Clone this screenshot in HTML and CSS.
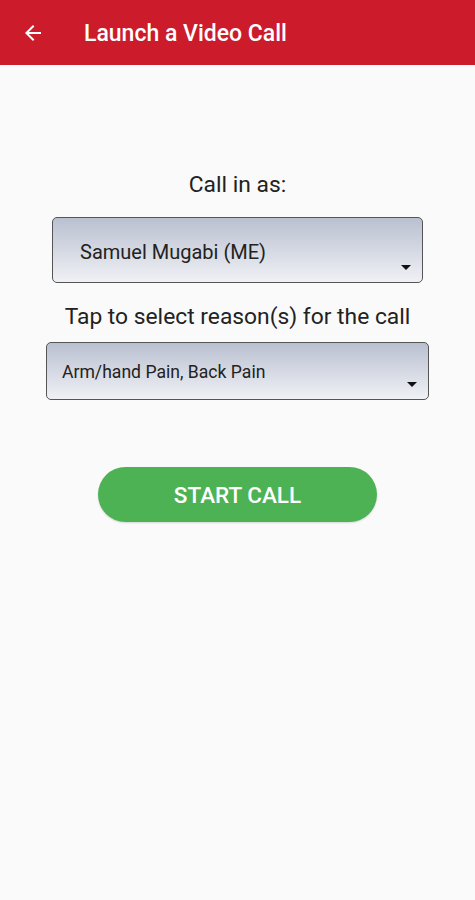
FILE: index.html
```html
<!DOCTYPE html>
<html lang="en">
<head>
  <meta charset="UTF-8" />
  <meta name="viewport" content="width=device-width, initial-scale=1.0" />
  <title>Launch a Video Call</title>
  <link rel="stylesheet" href="styles.css">
</head>
<body>
  <header class="toolbar">
    <svg class="back" width="24" height="24" viewBox="0 0 24 24">
      <path d="M20 11H7.83l5.59-5.59L12 4l-8 8 8 8 1.41-1.41L7.83 13H20v-2z" fill="#fff"/>
    </svg>
    <h1>Launch a Video Call</h1>
  </header>

  <main class="content">
    <p class="label">Call in as:</p>
    <div class="select select-user">
      <span>Samuel Mugabi (ME)</span>
      <i class="caret"></i>
    </div>

    <p class="label label-reason">Tap to select reason(s) for the call</p>
    <div class="select select-reason">
      <span>Arm/hand Pain, Back Pain</span>
      <i class="caret"></i>
    </div>

    <button class="start">START CALL</button>
  </main>
</body>
</html>
```

FILE: styles.css
```css
body {
  margin: 0;
  font-family: Roboto, sans-serif;
  background: #fafafa;
  min-height: 900px;
}

.toolbar {
  height: 65px;
  background: #cc1b2b;
  display: flex;
  align-items: center;
  padding-left: 21px;
  box-sizing: border-box;
}

.back {
  flex-shrink: 0;
}

.toolbar h1 {
  margin: 2px 0 0 39px;
  color: #fff;
  font-size: 23px;
  font-weight: 500;
}

.content {
  display: flex;
  flex-direction: column;
  align-items: center;
  padding-top: 107px;
}

.label {
  margin: 0;
  font-size: 22.8px;
  color: #222;
  line-height: 26px;
}

.label-reason {
  margin-top: 21px;
}

.select {
  position: relative;
  box-sizing: border-box;
  border: 1px solid #555;
  border-radius: 5px;
  background: linear-gradient(#b9c0d0, #f0f1f5);
  color: #222;
  display: flex;
  align-items: center;
}

.select-user {
  width: 371px;
  height: 66px;
  margin-top: 19px;
  padding: 3px 0 0 27px;
  font-size: 20px;
}

.select-reason {
  width: 383px;
  height: 58px;
  margin-top: 12px;
  padding: 1px 0 0 15px;
  font-size: 17.6px;
}

.caret {
  position: absolute;
  right: 11px;
  bottom: 12px;
  width: 0;
  height: 0;
  border-left: 5px solid transparent;
  border-right: 5px solid transparent;
  border-top: 5px solid #111;
}

.start {
  margin-top: 67px;
  width: 279px;
  height: 55px;
  border: none;
  border-radius: 28px;
  background: #4db254;
  color: #fff;
  font-family: Roboto, sans-serif;
  font-size: 22.5px;
  font-weight: 500;
  box-shadow: 0 1px 2px rgba(0,0,0,0.15);
}
```
